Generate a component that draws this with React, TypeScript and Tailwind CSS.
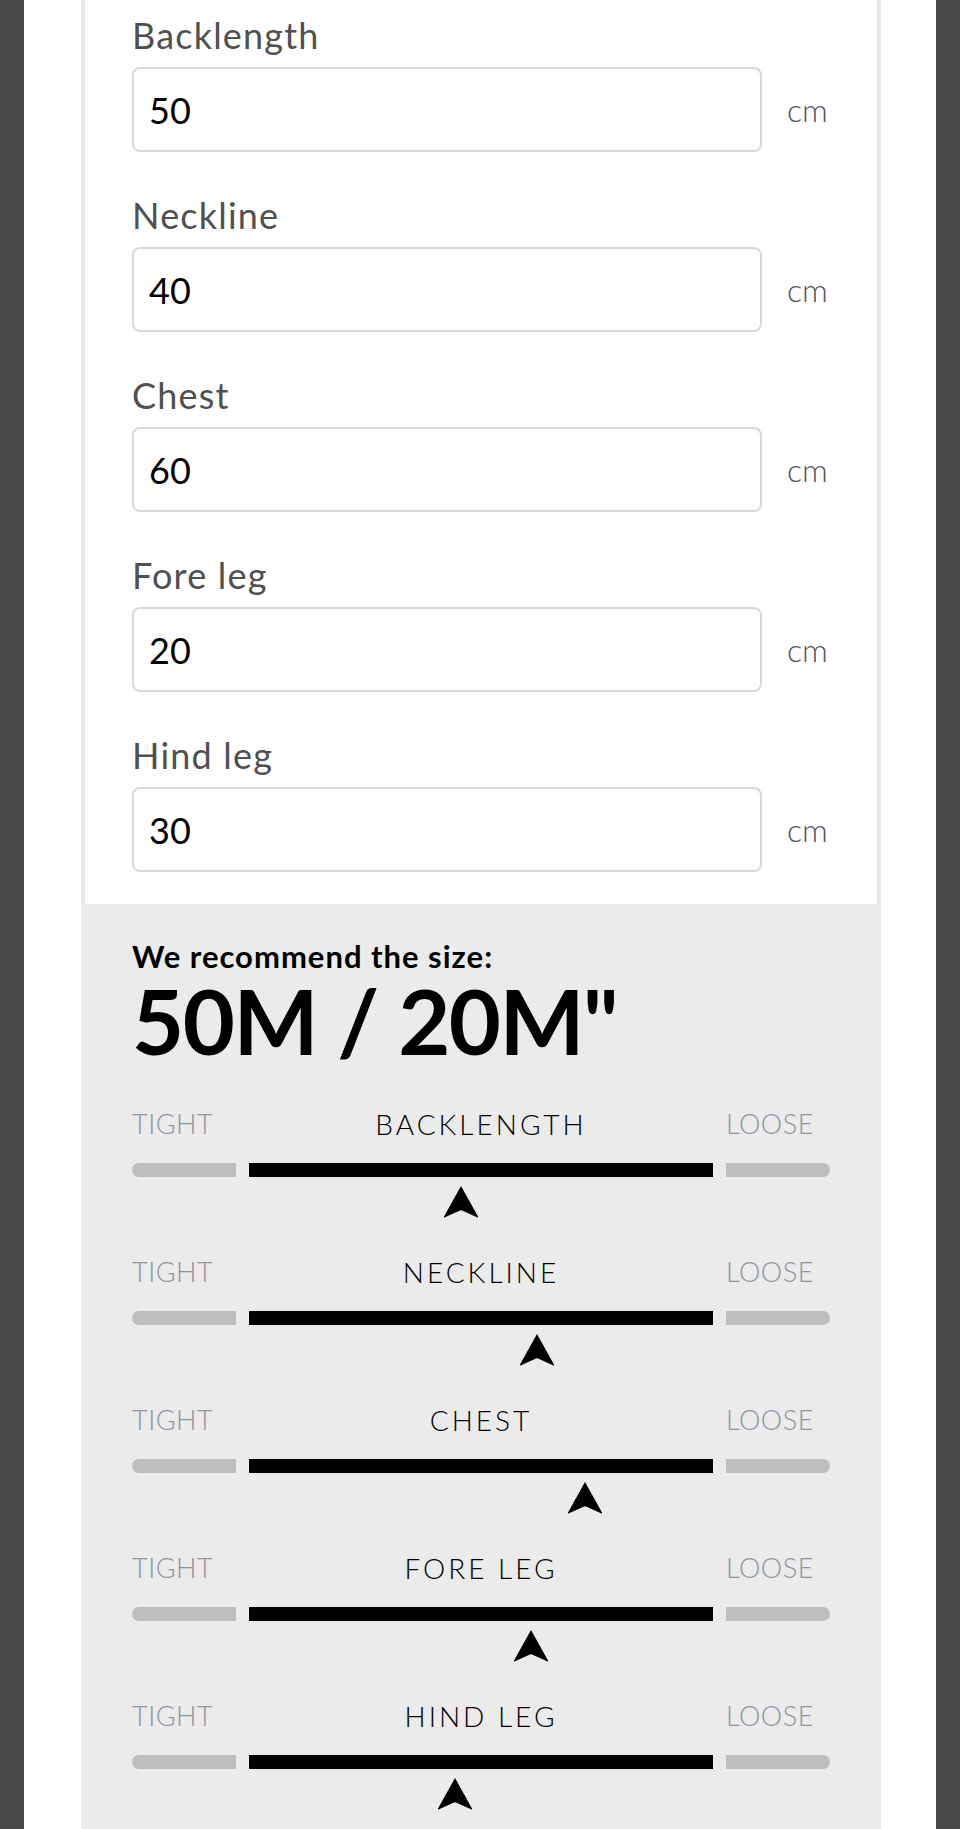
import { useState } from 'react';

const fields = [
  { label: 'Backlength', value: '50' },
  { label: 'Neckline', value: '40' },
  { label: 'Chest', value: '60' },
  { label: 'Fore leg', value: '20' },
  { label: 'Hind leg', value: '30' },
];

const fits = [
  { name: 'BACKLENGTH', pos: 45.7 },
  { name: 'NECKLINE', pos: 62 },
  { name: 'CHEST', pos: 72.5 },
  { name: 'FORE LEG', pos: 60.7 },
  { name: 'HIND LEG', pos: 44.3 },
];

const Pointer = () => (
  <svg viewBox="0 0 36 33" className="w-[36px] h-[33px]">
    <path d="M18 1 L35 31.5 Q35.5 33 34 32.3 L19 25.5 Q18 25 17 25.5 L2 32.3 Q0.5 33 1 31.5 Z" fill="#000" />
  </svg>
);

const FitRow = ({ name, pos }: { name: string; pos: number }) => (
  <div className="grid grid-cols-[104px_1fr_104px] gap-x-[13px]">
    <span className="text-[27px] leading-[30px] font-light tracking-[0.5px] text-[#8d95a3]">TIGHT</span>
    <span className="text-[28px] leading-[30px] font-light tracking-[3px] text-black text-center">{name}</span>
    <span className="text-[27px] leading-[30px] font-light tracking-[0.5px] text-[#8d95a3]">LOOSE</span>
    <div className="mt-[24px] h-[14px] rounded-l-full bg-[#bfbebc]" />
    <div className="mt-[24px] h-[14px] bg-black" />
    <div className="mt-[24px] h-[14px] rounded-r-full bg-[#bfbebc]" />
    <div />
    <div className="relative mt-[8px] h-[33px]">
      <div className="absolute top-0 -translate-x-1/2" style={{ left: `${pos}%` }}>
        <Pointer />
      </div>
    </div>
    <div />
  </div>
);

export default function App() {
  const [values, setValues] = useState(fields.map((f) => f.value));

  return (
    <div className="min-h-screen bg-[#4a4a4a] px-6 font-['Lato','Liberation_Sans',sans-serif]">
      <div className="min-h-screen w-[912px] bg-white">
        <div className="ml-[57px] w-[800px]">
          <div className="border-x-4 border-[#e8e8e8] bg-white pl-[47px] pt-[13px] pb-[32px]">
            <div className="flex flex-col gap-y-[41px]">
              {fields.map((f, i) => (
                <div key={f.label} className="flex flex-col">
                  <label className="text-[36px] leading-[44px] tracking-[1.2px] text-[#505050]">
                    {f.label}
                  </label>
                  <div className="mt-[10px] flex items-center">
                    <input
                      className="h-[85px] w-[630px] rounded-[8px] border-2 border-[#d8d8d8] bg-white px-[15px] text-[36px] text-black outline-none"
                      value={values[i]}
                      onChange={(e) => {
                        const next = [...values];
                        next[i] = e.target.value;
                        setValues(next);
                      }}
                    />
                    <span className="ml-[25px] text-[32px] font-light text-[#555]">cm</span>
                  </div>
                </div>
              ))}
            </div>
          </div>
          <div className="bg-[#ebebeb] px-[51px] pt-[36px] pb-[60px]">
            <p className="text-[31px] leading-[32px] font-bold tracking-[1px] text-black">We recommend the size:</p>
            <p className="text-[90px] leading-[96px] font-bold tracking-[-1.5px] text-black">50M / 20M"</p>
            <div className="mt-[41px] flex flex-col gap-y-[39px]">
              {fits.map((f) => (
                <FitRow key={f.name} name={f.name} pos={f.pos} />
              ))}
            </div>
          </div>
        </div>
      </div>
    </div>
  );
}
